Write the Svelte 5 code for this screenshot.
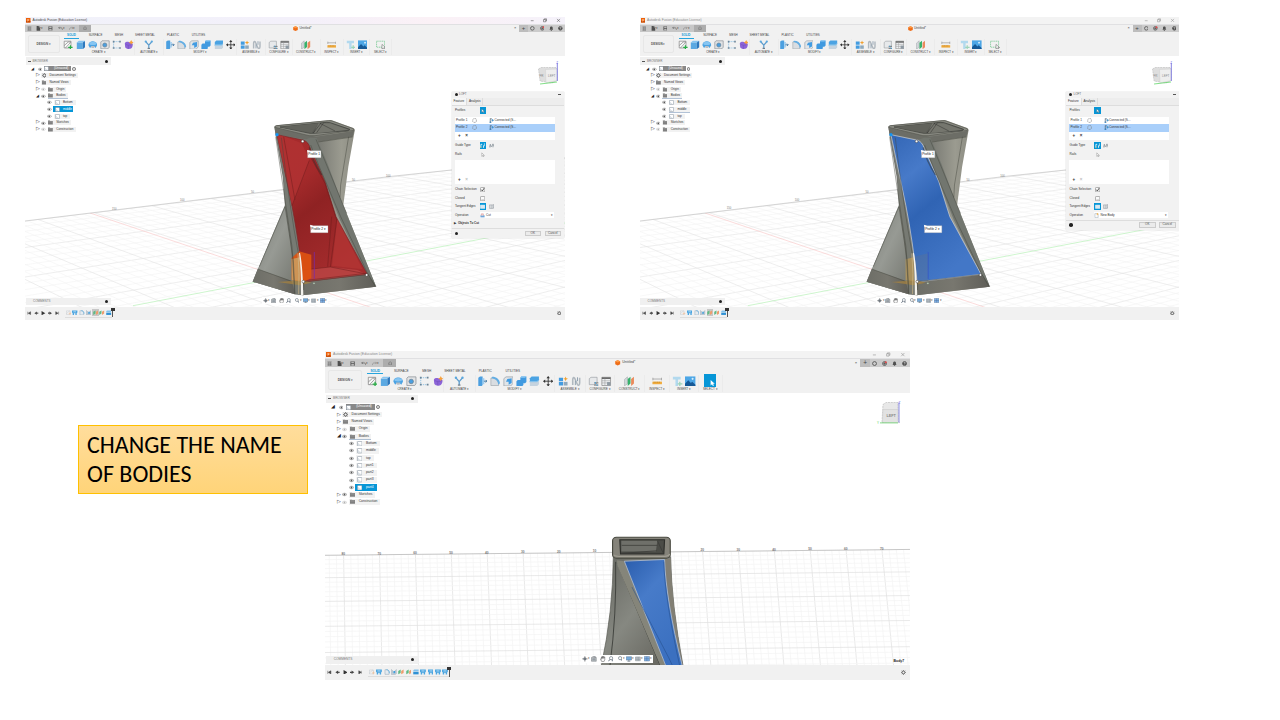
<script>
  const tabs = [['SOLID', 15], ['SURFACE', 33], ['MESH', 14], ['SHEET METAL', 38], ['PLASTIC', 18], ['UTILITIES', 33]];
  const groups = [
    ['CREATE', 72, ['sketch', 'extrude', 'revolve', 'hole', 'pattern', 'form']],
    ['AUTOMATE', 29, ['automate']],
    ['MODIFY', 73, ['press', 'fillet', 'shell', 'combine', 'split', 'move']],
    ['ASSEMBLE', 29, ['component', 'joint']],
    ['CONFIGURE', 26.5, ['config', 'table']],
    ['CONSTRUCT', 28, ['planes']],
    ['INSPECT', 23, ['measure']],
    ['INSERT', 26.5, ['insert', 'image']],
    ['SELECT', 22, ['select']]
  ];
  const head = [
    { t: 'Document Settings', k: 'gear', lv: 1 },
    { t: 'Named Views', k: 'folder', lv: 1 },
    { t: 'Origin', k: 'folder', lv: 1, eye: 'off' },
    { t: 'Bodies', k: 'folder', lv: 1, eye: 'on', open: true, under: true }
  ];
  const foot = [
    { t: 'Sketches', k: 'folder', lv: 1, eye: 'on' },
    { t: 'Construction', k: 'folder', lv: 1, eye: 'off' }
  ];
  const tree = (bodies, state, at) => [
    ...head,
    ...bodies.map((t, i) => ({ t, k: 'body', lv: 2, eye: 'on', sel: state === 'sel' && i === at, under: state === 'under' && i === at })),
    ...foot
  ];
  const windows = {
    cut: { id: 'cut', rows: tree(['Bottom', 'middle', 'top'], 'sel', 1), feats: ['sk', 'loft', 'fil', 'sh', 'pl', 'pl', 'sp'], active: 4, op: 'Cut' },
    body: { id: 'body', rows: tree(['Bottom', 'middle', 'top'], 'under', 1), feats: ['sk', 'loft', 'fil', 'sh', 'pl', 'pl', 'sp'], active: 4, op: 'New Body' },
    named: { id: 'named', rows: tree(['Bottom', 'middle', 'top', 'part1', 'part2', 'part3', 'part4'], 'sel', 6), feats: ['sk', 'loft', 'fil', 'sh', 'pl', 'pl', 'sp', 'loft', 'loft', 'loft', 'loft'], active: -1, large: true }
  };

  // Perspective floor grid: two fans of lines, each running to its own vanishing point
  const va = [1528, 41], vb = [-500, 20];
  const fanA = [], fanB = [];
  for (let i = 0; i < 42; i++) {
    const y = 221 + i * 5 + i * i * 0.06;
    fanA.push({ y, major: i % 5 === 0 });
  }
  for (let i = 0; i < 62; i++) {
    const x = -70 + i * 10.5 + i * i * 0.03;
    const y = 221 - 0.12 * (x - 25);
    const m = (y - vb[1]) / (x - vb[0]);
    fanB.push({ x, y, y2: y + m * (700 - x), major: i % 5 === 0 });
  }
  const vert = [];
  for (let i = -3; i < 86; i++) {
    const x = 343.5 + i * 7.18;
    vert.push({ x, x2: x + 6.5 + (x - 600) * 0.018, major: (i + 5) % 5 === 0 });
  }
  const horiz = [];
  for (let i = 0; i < 25; i++) {
    const y = 555.3 + i * 4.35 + i * i * 0.025;
    horiz.push({ y, major: i % 5 === 0 });
  }
  const ticks = Array.from({ length: 16 }, (_, i) => i).filter((i) => i !== 8);
</script>

{#snippet icon(name)}
  <svg class="ic" viewBox="0 0 12 12">
    {#if name === 'sketch'}
      <path d="M1.500 1.500h8.500v8.500h-8.500zM1.500 7l5-4.500 3.500 0M3 10L9.500 3" fill="#f8f8f8" stroke="#7d7d7d" stroke-width=".8" />
      <path d="M9.300 6.500v5.500M6.500 9.300h5.500" stroke="#27ae45" stroke-width="1.500" />
    {:else if name === 'extrude'}
      <path d="M1 3h7.500v8.500H1z" fill="#5ba9e2" /><path d="M1 3L3.500 1h8L8.500 3z" fill="#86c5f2" /><path d="M8.500 3l3-2v8l-3 2.500z" fill="#2d78bd" />
    {:else if name === 'revolve'}
      <path d="M.5 6.500C.5 0 11.500 0 11.500 6.500L9.500 10 7.500 8h-3L2.500 10z" fill="#4ba3e3" /><ellipse cx="6" cy="4.300" rx="4.500" ry="2" fill="#86c5f2" /><path d="M3.500 7.500h5l-1 2.500h-3z" fill="#b8bec5" />
    {:else if name === 'hole'}
      <path d="M1 2.500L2.500 1h9v8L10 11H1z" fill="#e1e3e5" stroke="#858b91" stroke-width=".8" /><circle cx="6" cy="6.300" r="2.600" fill="#4b9fe0" stroke="#6a7c8b" stroke-width=".8" />
    {:else if name === 'pattern'}
      <path d="M2 2h8M2 2v8M2 10h8" stroke="#5ba9de" stroke-width=".7" stroke-dasharray="1.500 1" fill="none" /><path d="M1 1h2v2H1zM9 1h2v2H9zM1 9h2v2H1zM9 9h2v2H9z" fill="#6c8496" />
    {:else if name === 'form'}
      <path d="M1 4.500C1 2.500 4 2 6 2.500s5 1 5 3-1 5-3 5.500S2 11 1.500 9z" fill="#8c64d7" /><path d="M2 5c2 2 6 2 8.500 0M5.500 6.500V11" stroke="#6f4dbb" stroke-width=".6" fill="none" /><path d="M9 0l1 2 2 1-2 1-1 2-1-2-2-1 2-1z" fill="#f8a13a" />
    {:else if name === 'automate'}
      <path d="M6 6.500v4M6 6.500L2.500 2.500M6 6.500l3.500-4" stroke="#5b9bcc" stroke-width="1.500" fill="none" /><circle cx="2.200" cy="2" r="1.400" fill="#5ba8de" /><circle cx="9.800" cy="2" r="1.400" fill="#5ba8de" /><path d="M4.500 10.500h3" stroke="#6f7a84" stroke-width="1.400" />
    {:else if name === 'press'}
      <path d="M1.500 2l2-1.500h3v10L5 12H1.500z" fill="#4b9fe0" /><path d="M6.500 2.500h2v7h-2z" fill="#9cccf0" /><path d="M8 6h3.500M10 4.500L11.500 6 10 7.500" stroke="#376f9d" stroke-width="1" fill="none" />
    {:else if name === 'fillet'}
      <path d="M1 2.500c5-1 8 2 9 6V11H1z" fill="#d9dde1" stroke="#8c959d" stroke-width=".6" /><path d="M2.500 1c5 0 8.500 3 9 7.500L9.500 10c0-4-3-7-8-7.500z" fill="#63aee4" />
    {:else if name === 'shell'}
      <path d="M1 3L3.500 1h8v7.500L9 11.500H1z" fill="#e1e5e8" stroke="#8c959d" stroke-width=".7" /><path d="M5 3.500l5-1V8L6.500 10V6.500H3.500z" fill="#429ce2" />
    {:else if name === 'combine'}
      <path d="M5 2l1-1.500h6v6.500l-1.500 1.500H8.500V10.500L7 12H.5V6L2 4.500h3z" fill="#419ae0" /><path d="M5 2l1-1.500h6L10.500 2z" fill="#8ccaf4" />
    {:else if name === 'split'}
      <path d="M1 2.500L3 .5h8.500v3.500l-2 2H1z" fill="#4ba3e3" /><path d="M1 7h8.500l2-2v4.500l-2 2H1z" fill="#c5d3df" /><path d="M.5 6.500h9.200l2-2" stroke="#5ab0ea" stroke-width=".8" fill="none" />
    {:else if name === 'move'}
      <path d="M6 1v10M1 6h10" stroke="#333" stroke-width="1" /><path d="M6 0l2 2.500H4zM6 12l2-2.500H4zM0 6l2.500-2v4zM12 6L9.500 4v4z" fill="#333" />
    {:else if name === 'component'}
      <path d="M1 2h4.800v4H1zM1 6.800h4.800V11H1z" fill="#439ce0" /><path d="M6.500 6.800H11V11H6.500z" fill="#8fa9bd" /><path d="M8.800.5l.8 2 2 .7-2 .8-.8 2-.8-2-2-.8 2-.7z" fill="#f2a02d" />
    {:else if name === 'joint'}
      <path d="M2 10.500v-6c0-4 2.500-3 3 0l2 4.500c1 2.500 3 2 3-1V2" stroke="#b0b8bf" stroke-width="1.800" fill="none" /><path d="M5 10.500v-5M7.500 1.500v4.500" stroke="#8397a8" stroke-width="1" />
    {:else if name === 'config'}
      <path d="M1.500 3l2-1.500H10.500v6.500l-2 2h-7z" fill="#e7e9eb" stroke="#92979c" stroke-width=".7" /><path d="M7 8h5M7 10.500h5" stroke="#666" stroke-width="1" /><path d="M8.500 7v2M10.500 9.500v2" stroke="#389fdf" />
    {:else if name === 'table'}
      <path d="M1 1.500h10v9.500H1z" fill="#eef0f2" stroke="#777" stroke-width=".7" /><path d="M1 2.500h10" stroke="#5b5b5b" stroke-width="1.700" /><path d="M1 5.500h10M1 8h10M4.500 3v7.500" stroke="#999" stroke-width=".6" /><path d="M7 7h4v4H7z" fill="#8f9aa3" />
    {:else if name === 'planes'}
      <path d="M.5 4L4 1v8L.5 11.500z" fill="#d2d7da" stroke="#92989c" stroke-width=".5" /><path d="M4.300 3.500L7.500.8v8L4.300 11.500z" fill="#37b16c" /><path d="M8.200 3.500L11.500.8v8l-3.300 2.700z" fill="#e98a5c" />
    {:else if name === 'measure'}
      <path d="M1 3.500h10M1 2v3M11 2v3" stroke="#888" stroke-width=".7" /><path d="M.5 6.500h11V9.500H.5z" fill="#f0ab3c" /><path d="M2.500 6.500V8M4.500 6.500V8M6.500 6.500V8M8.500 6.500V8" stroke="#aa7422" stroke-width=".5" />
    {:else if name === 'insert'}
      <path d="M1 1h9v3H7v7.500H4V4H1z" fill="#b2d9ee" /><path d="M9 6.500v5.500M6.500 9.200h5.500" stroke="#9dd4b9" stroke-width="1.500" />
    {:else if name === 'image'}
      <path d="M0 .5h12v11H0z" fill="#4ca6e6" /><circle cx="8.800" cy="3.300" r="1.200" fill="#d6eefb" /><path d="M0 9l3.800-4 3 3 1.500-1.500L12 10v1.500H0z" fill="#165996" />
    {:else if name === 'select'}
      <path d="M.7 1.500h10v7.500H.7z" fill="none" stroke="#55bd78" stroke-width=".8" stroke-dasharray="1.500 .8" /><path d="M7.500 5.500v6l1.500-1.400 1 1.900 1-.5-1-2h2z" fill="#fff" stroke="#555" stroke-width=".6" />
    {:else if name === 'picked'}
      <path d="M6.500 4.500v6.500l1.600-1.400 1 2 1.200-.6-1-2h2z" fill="#fff" />
    {:else if name === 'cursor'}
      <path d="M4 2v8l2-1.800 1.200 2.600 1.300-.6L7.300 7.700H10z" fill="#fff" stroke="#555" stroke-width=".7" />
    {:else if name === 'eye' || name === 'eyeoff'}
      <g opacity={name === 'eye' ? 1 : 0.45}><path d="M0 6C3 2 9 2 12 6 9 10 3 10 0 6z" fill="#fff" stroke="#666" stroke-width="1.100" /><circle cx="6" cy="6" r="2.200" fill="#555" /></g>
    {:else if name === 'folder'}
      <path d="M0 1.500h4.500l1 1H12v8.500H0z" fill="#808080" /><path d="M1 4.500h10" stroke="#ccc" stroke-width=".7" />
    {:else if name === 'gear'}
      <circle cx="6" cy="6" r="3.500" fill="none" stroke="#5a5a5a" stroke-width="2.200" /><path d="M6 0v2M6 10v2M0 6h2M10 6h2M1.800 1.800l1.400 1.400M8.800 8.800l1.400 1.400M10.200 1.800L8.800 3.200M3.200 8.800l-1.400 1.400" stroke="#5a5a5a" stroke-width="1.800" />
    {:else if name === 'body'}
      <rect x="1" y="1" width="10" height="10" rx="1.500" fill="#fff" stroke="#7d8c9b" stroke-width="1.200" /><path d="M3.500 5v3.500h4" stroke="#a9b8c5" fill="none" />
    {:else if name === 'orange'}
      <path d="M.5 3L6 .5 11.500 3v6.500L6 12 .5 9.500z" fill="#ef6d18" /><path d="M.5 3L6 5.500 11.500 3 6 .5z" fill="#ff9b43" />
    {:else if name === 'app'}
      <path d="M0 0h12v12H0z" fill="#ed610b" /><path d="M0 8h12v4H0z" fill="#c94c06" /><path d="M4 2.500h4.500V4H5.500v1.200h2.500v1.300H5.500V9H4z" fill="#ffd9b5" />
    {:else if name === 'menu'}
      <path d="M1 2h10M1 5h10M1 8h10M1 11h10M4 2v9M8 2v9" stroke="#666" stroke-width="1.100" />
    {:else if name === 'file'}
      <path d="M1.500 0h6L10.500 3v9H1.500z" fill="#4e4e4e" /><path d="M7.500 0V3h3" stroke="#ccc" fill="none" />
    {:else if name === 'save'}
      <path d="M1 1h10v10H1z" fill="#565656" /><path d="M3 2h6v3H3zM3 7h6v4H3z" fill="#bababa" />
    {:else if name === 'undo' || name === 'redo'}
      <path transform={name === 'redo' ? 'translate(12 0) scale(-1 1)' : ''} d="M4 2L1.500 4.500 4 7M2 4.500h5c3 0 4 2 4 5" fill="none" stroke={name === 'undo' ? '#555' : '#888'} stroke-width="1.500" />
    {:else if name === 'home'}
      <path d="M1 6l5-4 5 4M2.500 5.500V11h7V5.500" fill="none" stroke="#707070" stroke-width="1.700" />
    {:else if name === 'clock' || name === 'online' || name === 'help'}
      <circle cx="6" cy="6" r="4.600" fill={name === 'help' ? '#515151' : 'none'} stroke="#515151" stroke-width="2" />
      {#if name === 'online'}<path d="M3 6h6M6 3v6" stroke="#555" stroke-width="2" /><circle cx="9" cy="3" r="2.500" fill="#e24b4b" />{/if}
      {#if name === 'help'}<path d="M4.300 4.500c0-2 3.500-2 3.500 0C7.800 6 6 5.500 6 7.500M6 9v1" stroke="#fff" stroke-width="1.200" fill="none" />{/if}
    {:else if name === 'bell'}
      <path d="M1 9.500l1.500-2V5c0-5 7-5 7 0v2.500l1.500 2zM4.500 10h3v2h-3z" fill="#505050" />
    {:else if name === 'orbit'}
      <path d="M6 0v12M0 6h12" stroke="#555" /><circle cx="6" cy="6" r="3.300" fill="#727981" />
    {:else if name === 'look'}
      <path d="M1 3h10v8H1zM3 1h6v2" fill="#bcc1c5" stroke="#696e73" /><path d="M3 6h6M3 8h6" stroke="#69737d" />
    {:else if name === 'hand'}
      <path d="M3 11L1 6l2 .5V2h1.500v3V1H6v4l.5-4H8v4l.7-3H10v6l-2 4z" fill="#fafafa" stroke="#555" stroke-width="1.100" />
    {:else if name === 'zoom' || name === 'fit'}
      <circle cx="6.500" cy="4.500" r="3.400" fill="#f9fbfc" stroke="#66717b" stroke-width="1.300" /><path d={name === 'zoom' ? 'M4 7L1 11M9 7v4' : 'M9 7l2.500 4'} stroke="#39495a" stroke-width="1.600" />
    {:else if name === 'display'}
      <path d="M.5 1.500h11v7H.5z" fill="#75aada" stroke="#58738f" /><path d="M3 11h6M6 8v3" stroke="#5e6c79" stroke-width="1.300" />
    {:else if name === 'grid'}
      <path d="M1 2h10v8H1zM1 4.500h10M1 7.500h10M4.300 2v8M7.700 2v8" fill="#dce1e6" stroke="#77818a" stroke-width="1" />
    {:else if name === 'views'}
      <path d="M.5 1h11v9.500H.5z" fill="#7fb0e6" stroke="#667d98" /><path d="M6 1v9.500M.5 5.800h11" stroke="#4e709b" />
    {:else if name === 'sk'}
      <path d="M1 2h8v8H1zM1 8l7-6" fill="#f3f3f3" stroke="#b5bcc3" stroke-width=".8" /><path d="M9 5v6M6 8h6" stroke="#f5b581" />
    {:else if name === 'loft'}
      <path d="M0 1h12v4.500L10.500 7v4.500h-3V7.500h-3v4h-3V7L0 5.500z" fill="#4ba5e0" /><path d="M3 4h6" stroke="#d4edfd" stroke-width="1.500" />
    {:else if name === 'fil'}
      <path d="M2 1.500h4c3 1 4.500 3 4.500 5.500v4H2z" fill="#e6ebf0" stroke="#8ba3b5" /><path d="M5 1.500c4 0 6 2 6 7" stroke="#57ade2" stroke-width="1.600" fill="none" />
    {:else if name === 'sh'}
      <path d="M1 1V11.500H8.500l2.500-2V1L8.500 4v4H4V4z" fill="#c3cfd9" stroke="#8494a2" stroke-width=".7" /><path d="M5 4h3.500v4.500H5z" fill="#3e9fdd" />
    {:else if name === 'pl'}
      <path d="M.5 4L5.500 1v7L.5 11z" fill="#60b984" /><path d="M6.500 4L11.500 1v7l-5 3z" fill="#ee9d6d" />
    {:else if name === 'sp'}
      <path d="M.5 3L2.500 1H11.500v4H.5z" fill="#84c2ec" /><path d="M.5 6H11.500v5H.5z" fill="#2f91d4" />
    {:else if name === 'first'}
      <path d="M2 2v8M10 2L3.500 6 10 10z" stroke="#444" fill="#444" stroke-width="1.300" />
    {:else if name === 'prev'}
      <path d="M8 1.500L1 6l7 4.500z" fill="#444" /><path d="M7 6h5" stroke="#444" stroke-width="3" />
    {:else if name === 'play'}
      <path d="M1.500 0L12 6 1.500 12z" fill="#333" />
    {:else if name === 'next'}
      <path d="M4 1.500L11 6l-7 4.500z" fill="#444" /><path d="M0 6h5" stroke="#444" stroke-width="3" />
    {:else if name === 'last'}
      <path d="M10 2v8M2 2l6.500 4L2 10z" stroke="#444" fill="#444" stroke-width="1.300" />
    {:else if name === 'profile'}
      <path d="M2 4l2-2.500h5l1.500 2.500v4L8.500 10.500H4L1.500 8z" fill="none" stroke="#777" stroke-width="1.300" stroke-dasharray="5 1" />
    {:else if name === 'chain'}
      <path d="M3 1v10M3 2h4M3 10h3" stroke="#3a5061" stroke-width="1.500" fill="none" /><path d="M5 5.500h5M8 3l3 2.500L8 8z" stroke="#3185c4" fill="#3185c4" /><circle cx="3" cy="10" r="1.700" fill="#3185c4" />
    {:else if name === 'rails'}
      <path d="M2 10V3h3M8 11V6h3M10 1v3" stroke="#fff" stroke-width="1.800" fill="none" /><circle cx="2" cy="9.500" r="1.300" fill="#f3d272" />
    {:else if name === 'center'}
      <path d="M1 10l2-7 3 6 3-7 2 6M3 3v7M9 2v8" stroke="#7b8791" stroke-width="1.200" fill="none" />
    {:else if name === 'edge'}
      <path d="M1 2h8v8H1zM9 2l2-1v8L9 10M5 2v8" stroke="#798087" fill="#e4e7e9" stroke-width=".9" />
    {:else if name === 'edgeon'}
      <path d="M1 2.500h10v7.500H1z" fill="#dce8ef" stroke="#fff" />
    {:else if name === 'check' || name === 'empty'}
      <rect x="1" y="1" width="10" height="10" rx="2" fill="#fafafa" stroke="#777" stroke-width="1.300" />{#if name === 'check'}<path d="M3 6l2.300 3L9.500 2.500" stroke="#333" stroke-width="1.800" fill="none" />{:else}<path d="M3 8.500h6" stroke="#999" />{/if}
    {:else if name === 'opcut'}
      <path d="M1 5.500h10v5H1z" fill="#70a7da" /><path d="M3 6V2h5v4" fill="#f7dddd" stroke="#cc6b67" />
    {:else if name === 'opnew'}
      <path d="M2 1.500h6L10 4v7H2z" fill="#fafafa" stroke="#8396a8" /><path d="M8.500 0v5M6 2.500h5" stroke="#f4ac3b" stroke-width="1.500" />
    {/if}
  </svg>
{/snippet}

{#snippet tower(kind)}
  {@const dx = kind === 'cut' ? 0 : -0.6}
  <svg class="scene" viewBox="25 56 540 250.500" preserveAspectRatio="none">
    <defs>
      <clipPath id="floor-{kind}"><path d="M25 221L390 176.500 565 157V307H25z" /></clipPath>
      <linearGradient id="metal-{kind}" x1="0" x2="1"><stop offset="0" stop-color="#6c6d68" /><stop offset=".55" stop-color="#7d7e77" /><stop offset=".72" stop-color="#9b9b90" /><stop offset="1" stop-color="#77776f" /></linearGradient>
      <linearGradient id="side-{kind}" x1="0" x2="1" y2="1"><stop offset="0" stop-color="#777973" /><stop offset=".5" stop-color="#979a94" /><stop offset="1" stop-color="#72746d" /></linearGradient>
      <linearGradient id="base-{kind}" x1="0" x2="1"><stop offset="0" stop-color="#6d6e67" /><stop offset=".5" stop-color="#78776f" /><stop offset="1" stop-color="#5f5e58" /></linearGradient>
      <linearGradient id="face-{kind}" x1="0" y1="0" x2=".5" y2="1">
        {#if kind === 'cut'}<stop offset="0" stop-color="#a72b2c" /><stop offset=".35" stop-color="#a42a2b" /><stop offset=".55" stop-color="#8f2223" /><stop offset="1" stop-color="#a52c2d" />
        {:else}<stop offset="0" stop-color="#3366b5" /><stop offset=".3" stop-color="#477ac9" /><stop offset=".55" stop-color="#3064b4" /><stop offset="1" stop-color="#4377c7" />{/if}
      </linearGradient>
    </defs>
    <g clip-path="url(#floor-{kind})" fill="none">
      {#each fanA as l}<line x1="25" y1={l.y} x2={va[0]} y2={va[1]} stroke={l.major ? '#e2e2e2' : '#f3f3f3'} stroke-width=".6" />{/each}
      {#each fanB as l}<line x1={l.x} y1={l.y} x2="700" y2={l.y2} stroke={l.major ? '#e2e2e2' : '#f3f3f3'} stroke-width=".6" />{/each}
      <path d="M90 213L450 334" stroke="#f8c4c4" stroke-width=".6" />
      <path d="M133 305.700L565 223" stroke="#b9f0b9" stroke-width=".7" />
    </g>
    <path d="M25 221L390 176.500 565 158" stroke="#c4c4c4" stroke-width=".7" fill="none" />
    <g class="tick"><text x="112" y="209.500">150</text><text x="180" y="201">100</text><text x="251" y="193">50</text><text x="352" y="181">50</text><text x="386" y="177">100</text></g>
    <g transform="translate({240 + dx} 110) scale(.3333)" stroke-linejoin="round">
      <path d="M38 515L135 290 128 200 103 52Q103 47 110 46L265 31Q273 29 280 32L340 54Q346 57 344 63L325 170 310 285 408 530 188 556 165 553z" fill="url(#metal-{kind})" />
      <path d="M38 515L135 285 150 390 165 553z" fill="url(#side-{kind})" />
      <path d="M53 477L156 513 165 553 38 515z" fill="url(#base-{kind})" />
      <path d="M188 515L384 493 408 530 188 556z" fill="url(#base-{kind})" />
      <path d="M104 55L208 76 228 80 343 62 338 80 235 95 205 90 107 72z" fill="#6c6d66" />
      <path d="M104 52Q104 48 110 47L265 32 273 32 340 56 342 61 225 77 207 77z" fill="#8b8c84" stroke="#55564f" stroke-width="2" />
      <path d="M120 51L260 37 271 38 330 58 325 62 222 70 209 70z" fill="#5b5c56" stroke="#3d3e39" stroke-width="2" />
      <path d="M235 40L270 40 326 59 245 68 222 69z" fill="#75766e" /><path d="M120 51L235 40 215 69z" fill="#62635c" /><path d="M243 39L220 69M251 38L230 68M240 40L285 63" stroke="#30312e" stroke-width="1.500" fill="none" />
      <path d="M107 72L131 200 137 290 156 430 165 553 188 555 186 510 178 425 155 290 111 74z" fill="#777a73" />
      <path d="M193 90L210 83 230 84 262 160 308 282 408 528 382 495 300 330 220 125z" fill="#72766f" />
      <path d="M111 74L192 91Q205 96 211 115L255 215 288 320 382 493 190 516Q176 390 156 287z" fill="url(#face-{kind})" stroke={kind === 'cut' ? '#7f2324' : '#d3d5d6'} stroke-width="2" />
      {#if kind === 'cut'}
        <path d="M111 74L156 287 208 151 185 100 135 80z" fill="#b63635" opacity=".6" />
        <path d="M190 480L270 471 352 480 380 493 190 516z" fill="#bd4a49" opacity=".7" />
        <path d="M292 328L368 478 276 467z" fill="#b53635" opacity=".7" />
        <path d="M156 287L208 151M131 80L165 270M200 120L255 220 290 330 271 471 380 492M190 480L271 471M275 320L263 470M190 512L378 490" stroke="#701c1d" stroke-width="1.500" fill="none" />
        <path d="M155 444L177 424 214 434V505L188 516 155 510z" fill="#e0530f" opacity=".9" /><path d="M155 447L180 442V514L155 511z" fill="#caa465" opacity=".8" />
      {:else}
        <path d="M155 448L180 442V514L155 511z" fill="#b99a58" opacity=".75" /><path d="M180 440L223 430V513L188 516z" fill="#687487" opacity=".3" />
      {/if}
      <path d="M223 426V507" stroke={kind === 'cut' ? '#7629b6' : '#3452c7'} stroke-width="2" />
      <path d="M113 516L190 510 215 518 180 526z" fill="#b48939" opacity=".6" />
      <path d="M177 430Q183 470 183 555H190Q188 465 180 428z" fill="#f5f3ee" /><path d="M174 430Q179 490 176 552" stroke="#ceb889" stroke-width="2" fill="none" />
      <path d="M135 290L160 450 165 553M107 80L135 270 156 410 164 550M124 83Q150 300 175 430M212 105L240 175 302 320 384 493 408 530M228 88L262 170 308 282 320 310M326 80L302 225 300 262M235 96L338 81M53 477L152 513M58 470L135 290M191 540V515L378 494M384 493L405 528" stroke="#45473f" stroke-width="1.400" fill="none" />
      <path d="M208 112Q216 150 245 195" stroke="#2b302d" stroke-width="4" opacity=".5" fill="none" />
      <g fill="#fff" stroke="#333" stroke-width="1.500"><circle cx="188" cy="94" r="4" /><circle cx="190" cy="515" r="4" /><circle cx="380" cy="495" r="4" /><circle cx="222" cy="520" r="2" stroke="#8cad8c" /></g>
      <circle cx="111" cy="74" r="5" fill="#1495f2" />
      <g class="tag"><path d="M203 122h40v21h-40zM212 347h52v21h-52z" fill="#fff" stroke="#aaa" /><text x="205" y="136">Profile 1</text><text x="214" y="361">Profile 2</text><text x="253" y="361">▾</text><path d="M201 120l9 2-7 6zM210 344l9 3-7 5z" fill="#fff" /></g>
    </g>
    <path d="M538.500 69L541 67.500 556 67.500 557 69V80.500L552 83 540 81z" fill="#dedede" stroke="#b3b3b3" stroke-width=".5" stroke-dasharray="2 .7" />
    <path d="M545.500 69.500L557 69V80.500L546 83z" fill="#eeeeee" stroke="#c9c9c9" stroke-width=".4" />
    <text class="cube" x="539.500" y="77">FR</text><text class="cube" x="548" y="77">LEFT</text>
    <path d="M557.300 63V81" stroke="#7774dc" stroke-width=".9" /><path d="M540 84L557 82" stroke="#62d66a" stroke-width=".8" /><text class="cube z" x="556.300" y="64">Z</text>
  </svg>
{/snippet}

{#snippet straight()}
  <svg class="scene" viewBox="325 393.500 585 271.400" preserveAspectRatio="none">
    <defs>
      <clipPath id="plane"><path d="M325 555.300L910 549.500V665H325z" /></clipPath>
      <linearGradient id="left" x1="0" x2="1" y2="1"><stop offset="0" stop-color="#64655f" /><stop offset=".45" stop-color="#868881" /><stop offset="1" stop-color="#5b5a53" /></linearGradient>
      <linearGradient id="blue" x1="0" x2=".6" y2="1"><stop offset="0" stop-color="#2a5dad" /><stop offset=".4" stop-color="#477bc9" /><stop offset="1" stop-color="#3b70c0" /></linearGradient>
    </defs>
    <g clip-path="url(#plane)">
      {#each vert as l}<line x1={l.x} y1="550" x2={l.x2} y2="665" stroke={l.major ? '#dfdfdf' : '#f3f3f3'} stroke-width=".7" />{/each}
      {#each horiz as l}<line x1="325" y1={l.y} x2="910" y2={l.y - 5.800} stroke={l.major ? '#e0e0e0' : '#f3f3f3'} stroke-width=".7" />{/each}
    </g>
    <path d="M325 555.300L910 549.500" stroke="#bbb" stroke-width=".8" />
    <g class="tick2">{#each ticks as i}<text x={341.500 + i * 35.900} y={555 - i * 0.350}>{Math.abs(i - 8) * 10}</text>{/each}</g>
    <g transform="translate(320 530) scale(.3795 .3356)">
      <path d="M773 80L924 80Q926 220 957 406H741Q772 245 773 80z" fill="url(#left)" stroke="#5b5c55" stroke-width="2" />
      <path d="M779 95Q782 250 764 404M783 98L897 404" stroke="#3b3d39" stroke-width="2.500" fill="none" />
      <path d="M783 90L802 93 912 406H898L783 104z" fill="#85857a" />
      <path d="M908 88L924 85Q927 225 957 406H952L916 230z" fill="#827f74" />
      <path d="M802 93L908 88Q911 205 955 406H912z" fill="url(#blue)" stroke="#aab7cc" stroke-width="2.500" />
      <path d="M822 170L919 380 930 406M906 94Q908 200 948 404" stroke="#234c89" stroke-width="1.500" fill="none" />
      <rect x="771" y="22" width="152" height="62" rx="10" fill="#85837a" stroke="#47483f" stroke-width="3" />
      <path d="M790 29H908L906 72H792z" fill="#4b4c47" stroke="#2e2f2b" stroke-width="3" /><path d="M794 32H889L885 64H794z" fill="#6f706a" /><path d="M889 32L905 70 794 70 887 62M795 46H889" fill="none" stroke="#393a36" stroke-width="2" />
      <path d="M774 74Q777 79 790 79H907Q918 79 922 72" stroke="#a29f94" stroke-width="3" fill="none" />
    </g>
    <path d="M883 405L886 403H898V421L882 423z" fill="#e8e8e8" stroke="#b5b5b5" stroke-width=".6" stroke-dasharray="2 .8" />
    <path d="M883 410H898V421.500L900 423H882.500z" fill="#e2e2e2" stroke="#c9c9c9" stroke-width=".5" /><text class="cube big" x="886.500" y="417.300">LEFT</text>
    <path d="M899 403V423" stroke="#8584db" stroke-width="1" /><path d="M880 423.300H898" stroke="#75d378" stroke-width=".9" /><text class="cube z" x="898.500" y="404">Z</text><text class="cube y" x="877" y="424">Y</text>
    <text class="bodyname" x="893.500" y="661.300">Body7</text>
  </svg>
{/snippet}

{#snippet dialog(w)}
  <section class="dialog">
    <header><i class="dot"></i>LOFT<b></b></header>
    <nav><span class="cur">Feature</span><span>Analysis</span></nav>
    <div class="row"><span class="lab">Profiles</span><span class="btn on">{@render icon('cursor')}</span></div>
    <div class="list">
      {#each ['Profile 1', 'Profile 2'] as p, i}
        <div class="prof" class:hit={i === 1}><span>{p}</span>{@render icon('profile')}<em>{@render icon('chain')}</em><span>Connected (S...</span></div>
      {/each}
      <p>+<span>×</span></p>
    </div>
    <div class="row guide"><span class="lab">Guide Type</span><span class="btn on">{@render icon('rails')}</span><span class="btn">{@render icon('center')}</span></div>
    <div class="row"><span class="lab">Rails</span><span class="btn">{@render icon('cursor')}</span></div>
    <div class="list rails"><p>+<span class="dim">×</span></p></div>
    <div class="row"><span class="lab">Chain Selection</span><span class="btn">{@render icon('check')}</span></div>
    <div class="row"><span class="lab">Closed</span><span class="btn">{@render icon('empty')}</span></div>
    <div class="row"><span class="lab">Tangent Edges</span><span class="btn on">{@render icon('edgeon')}</span><span class="btn">{@render icon('edge')}</span></div>
    <div class="row"><span class="lab">Operation</span><span class="drop">{@render icon(w.op === 'Cut' ? 'opcut' : 'opnew')}<span>{w.op}</span><u>▾</u></span></div>
    {#if w.op === 'Cut'}<div class="objects">▶<span>Objects To Cut</span></div>{/if}
    <footer><i class="dot info"></i><button>OK</button><button>Cancel</button></footer>
  </section>
{/snippet}

{#snippet fusion(w)}
  <article class="win" class:large={w.large}>
    <header class="title" class:lit={w.id === 'cut'}>{@render icon('app')}<span>Autodesk Fusion (Education License)</span><div class="caps"><svg viewBox="0 0 31 5"><path d="M.8 2.700h2.800M13.500 1.600h2.200v2.200h-2.200zM14.300 1.600V.8h2.200V3h-.7M27 .9l3 3M30 .9l-3 3" fill="none" stroke="currentColor" stroke-width=".5" /></svg></div></header>
    <div class="docs">
      <div class="quick">{@render icon('menu')}{@render icon('file')}<s>▾</s>{@render icon('save')}{@render icon('undo')}<s>▾</s>{@render icon('redo')}<s>▾</s></div>
      <div class="home">{@render icon('home')}</div>
      <div class="doc">{@render icon('orange')}<span>Untitled*</span></div>
      <span class="shut">×</span><div class="plus">+</div>
      <div class="status">{@render icon('clock')}{@render icon('online')}{@render icon('bell')}{@render icon('help')}</div>
    </div>
    <div class="ribbon">
      <div class="design">DESIGN ▾</div>
      <div class="tools">
        <div class="tabs">{#each tabs as [t, width], i}<span class:now={i === 0} style="width:{width}px">{t}</span>{/each}</div>
        <div class="groups">
          {#each groups as [name, width, icons]}
            <div class="group" style="width:{width}px">
              <div class="icons">{#each icons as k}<span class:chosen={k === 'select' && w.large}>{@render icon(k === 'select' && w.large ? 'picked' : k)}</span>{/each}</div>
              <small>{name} ▾</small>
            </div>
          {/each}
        </div>
      </div>
    </div>
    <main>
      {#if w.large}{@render straight()}{:else}{@render tower(w.id)}{/if}
      <aside>
        <div class="bar"><b></b>BROWSER<i class="dot"></i></div>
        <div class="node root"><u>◢</u>{@render icon('eye')}<div class="rootname">{@render icon('body')}<span>(Unsaved)</span></div><i class="target"></i></div>
        {#each w.rows as r}
          <div class="node" class:deep={r.lv === 2}>
            {#if r.lv === 1}<u class:shutarrow={!r.open}>{r.open ? '◢' : '▷'}</u>{/if}
            {#if r.eye}{@render icon(r.eye === 'on' ? 'eye' : 'eyeoff')}{/if}
            <div class="name" class:sel={r.sel} class:under={r.under}>{@render icon(r.k)}<span>{r.t}</span></div>
          </div>
        {/each}
      </aside>
      {#if w.op}{@render dialog(w)}{/if}
      <div class="bar comments">COMMENTS<i class="dot"></i></div>
      <div class="navbar">{@render icon('orbit')}<s>▾</s>{@render icon('look')}{@render icon('hand')}{@render icon('zoom')}{@render icon('fit')}<s>▾</s>{@render icon('display')}<s>▾</s>{@render icon('grid')}<s>▾</s>{@render icon('views')}<s>▾</s></div>
    </main>
    <div class="timeline">
      <div class="play">{#each ['first', 'prev', 'play', 'next', 'last'] as k}{@render icon(k)}{/each}</div>
      <div class="feats">{#each w.feats as f, i}<span class:active={i === w.active}>{@render icon(f)}</span>{/each}<i class="marker"></i></div>
      <div class="cog">{@render icon('gear')}</div>
    </div>
  </article>
{/snippet}

<div class="slide">
  <div class="top">{@render fusion(windows.cut)}{@render fusion(windows.body)}</div>
  <div class="bottom">
    <div class="note">CHANGE THE NAME<br />OF BODIES</div>
    {@render fusion(windows.named)}
  </div>
</div>

<style>
  :global(body) { background: #fff; }
  .slide { width: 1280px; height: 720px; overflow: hidden; box-sizing: border-box; padding: 17px 0 0 25px; background: #fff; }
  .top { display: flex; gap: 74.500px; height: 303px; }
  .bottom { display: flex; align-items: flex-start; gap: 17px; padding-left: 53px; margin-top: 31px; }
  .note { width: 230px; height: 69px; box-sizing: border-box; margin-top: 74px; border: 1px solid #ffc000; background: linear-gradient(#ffdd9c, #ffd479); padding: 4px 0 0 8px; font: 24px/29px Carlito, Calibri, Lato, sans-serif; color: #000; white-space: nowrap; }
  .win { display: grid; grid-template-rows: 6.500px 8.500px 24px 1fr 13.500px; grid-template-columns: 100%; width: 540px; height: 303px; flex: none; background: #fff; overflow: hidden; font: 3.200px/1 "Liberation Sans", Arial, sans-serif; color: #444; }
  .top .win:last-child { width: 539px; }
  .large { zoom: 1.0833; height: 303.700px; }
  .ic { display: block; flex: none; width: 5px; height: 5px; }
  s, u, em, i { text-decoration: none; font-style: normal; }
  s { font-size: 3px; width: 3px; flex: none; }
  .title { display: flex; align-items: center; gap: 2px; padding-left: 1px; background: #f3f3f3; color: #888; font-size: 3.300px; }
  .title > .ic { width: 4.500px; height: 4.500px; }
  .lit { background: linear-gradient(90deg, #f1f2fa, #f3f0fa 50%, #fbf1f6 75%, #f5f2fa); color: #444; }
  .title span { flex: 1; white-space: nowrap; }
  .caps { width: 31px; margin-right: 4px; }
  .caps svg { display: block; width: 31px; height: 5px; }
  .docs { display: flex; align-items: center; background: #f1f1f1; border-top: 1px solid #e0e0e2; box-sizing: border-box; }
  .quick { display: flex; align-items: center; height: 100%; width: 54px; background: #c7c7c7; box-sizing: border-box; padding-left: 2px; }
  .quick .ic { width: 4.800px; height: 4.800px; }
  .quick .ic:nth-child(1) { margin-right: 4.500px; }
  .quick .ic:nth-child(4) { margin: 0 5px 0 4px; }
  .quick .ic:nth-child(7) { margin-left: 3px; }
  .home { height: 100%; width: 12px; background: #adadad; display: flex; align-items: center; justify-content: center; }
  .home .ic { width: 4px; height: 4px; }
  .doc { flex: 1; display: flex; align-items: center; gap: 1.500px; padding-left: 202px; }
  .shut { font-size: 4px; width: 5px; }
  .plus { background: #bdbdbd; width: 9px; height: 100%; display: flex; align-items: center; justify-content: center; font-size: 6px; }
  .status { height: 100%; width: 37px; background: #cbcbcb; display: flex; align-items: center; justify-content: space-around; }
  .status .ic { width: 4.700px; height: 4.700px; }
  .ribbon { display: flex; background: #f1f1f1; }
  .design { margin: 3px 0 0 3px; width: 31.500px; height: 18px; box-sizing: border-box; border: 1px solid #e7e7e7; border-radius: 2px; display: flex; align-items: center; justify-content: center; font-size: 3px; font-weight: 700; color: #555; }
  .tools { padding-left: 2.500px; flex: 1; }
  .tabs { display: flex; height: 7px; padding-left: 2px; font-size: 2.900px; }
  .tabs span { text-align: center; white-space: nowrap; padding-top: 2.300px; box-sizing: border-box; height: 6.500px; }
  .tabs .now { color: #0696d7; border-bottom: 1px solid #26a4dd; font-weight: 700; }
  .groups { display: flex; padding-left: 1.200px; }
  .group { display: flex; flex-direction: column; align-items: center; height: 16px; box-sizing: border-box; border-right: 1px solid #ebebeb; flex: none; }
  .icons { display: flex; align-items: center; gap: 1.500px; height: 11px; }
  .icons span { display: flex; align-items: center; justify-content: center; width: 10.700px; height: 10.700px; }
  .icons .ic { width: 9.600px; height: 9.600px; }
  .icons .chosen { background: #0696d7; width: 11.300px; height: 12px; }
  small { font-size: 2.800px; margin-top: 1.200px; white-space: nowrap; }
  main { position: relative; overflow: hidden; background: #fff; }
  .scene { position: absolute; inset: 0; width: 100%; height: 100%; }
  .tick { font-size: 2.700px; fill: #777; } .tick2 { font-size: 3.200px; fill: #777; font-weight: 700; }
  .tag { font-size: 9.500px; fill: #111; } .cube { font-size: 3px; fill: #888; } .big { font-size: 3.800px; font-weight: 700; } .z { fill: #6664e7; } .y { fill: #4dd452; } .bodyname { font-size: 3.500px; font-weight: 700; fill: #222; }
  aside { position: absolute; left: .5px; top: 1.300px; width: 85px; }
  .bar { height: 7.500px; width: 85px; box-sizing: border-box; background: #f0f0f0; display: flex; align-items: center; gap: 2px; padding: 0 3px 0 2px; font-size: 3px; color: #777; }
  .bar b, .dialog header b { width: 3px; height: 1px; background: #555; }
  .dot { width: 3px; height: 3px; border-radius: 50%; background: #222; flex: none; }
  .bar .dot { margin-left: auto; }
  .node { display: flex; align-items: center; height: 6.750px; padding-left: 10.500px; font-size: 3.100px; color: #333; }
  .node > .ic { width: 4.600px; height: 4.600px; margin-right: 2px; }
  .node u { font-size: 4.200px; width: 5px; flex: none; color: #222; }
  .node .shutarrow { font-size: 4.800px; }
  .root { padding-left: 5.500px; margin-top: .7px; }
  .root u { width: 6.500px; }
  .rootname { height: 5px; display: flex; align-items: center; background: #888; color: #fff; width: 27px; margin-right: 1px; }
  .rootname span { margin-left: 5px; } .rootname .ic { height: 4.800px; width: 4.800px; }
  .target { width: 3.500px; height: 3.500px; border: 1px solid #777; border-radius: 50%; box-sizing: border-box; background: #ddd; }
  .name { display: flex; align-items: center; height: 5.200px; gap: 3.300px; background: #f2f2f2; padding: 0 2px 0 .5px; white-space: nowrap; }
  .name .ic { width: 4.800px; height: 4.800px; }
  .deep { padding-left: 21.500px; } .deep .name { padding-right: 3px; margin-left: .5px; } .deep .name .ic { height: 5px; width: 5px; }
  .name.under { box-shadow: 0 .6px #809bbb; }
  .name.sel { background: #0696d7; color: #fff; width: 15.500px; height: 6px; margin-left: -.5px; padding-left: 1.500px; }
  .comments { position: absolute; left: .5px; bottom: 1.500px; padding-left: 7.500px; }
  .navbar { position: absolute; left: 236.500px; bottom: 2.500px; height: 7px; display: flex; align-items: center; background: #fff; gap: 1.450px; padding: 0 1px; }
  .navbar .ic { width: 5.300px; height: 5.300px; } .navbar s { width: 1.300px; margin-left: -1px; }
  .navbar .ic:nth-child(3), .navbar .ic:nth-child(4), .navbar .ic:nth-child(5) { margin-right: 1px; }
  .timeline { background: #f1f1f1; display: flex; align-items: flex-start; padding-top: 2px; box-sizing: border-box; }
  .play { display: flex; gap: 2.700px; padding: 2px 0 0 2.300px; } .play .ic { width: 4.300px; height: 4.300px; }
  .feats { display: flex; position: relative; margin-left: 5.500px; height: 8.500px; border-bottom: 1px solid #ddd; margin-top: .7px; box-sizing: border-box; }
  .feats span { width: 6.750px; height: 7px; display: flex; align-items: center; justify-content: center; } .feats .ic { width: 5.400px; height: 5.400px; } .feats .active { background: #c7c7c7; }
  .marker { position: absolute; right: -1px; top: -1px; width: 1px; height: 9px; background: #555; }
  .marker::before { content: ''; position: absolute; left: -1.500px; width: 4px; height: 2.500px; background: #333; }
  .cog { margin-left: auto; padding: 2px 4px 0 0; } .cog .ic { width: 4.500px; height: 4.500px; }
  .dialog { position: absolute; left: 426.500px; top: 35.500px; width: 112.500px; background: #f2f2f2; box-shadow: 0 0 1px #bbb; font-size: 3.100px; color: #333; white-space: nowrap; }
  .dialog header { height: 6px; display: flex; align-items: center; padding: 0 3px; gap: 1.500px; color: #666; font-size: 3px; } .dialog header b { margin-left: auto; }
  .dialog nav { height: 8px; display: flex; border-bottom: .5px solid #ddd; box-sizing: border-box; background: #ededed; } .dialog nav span { padding: 2.500px 2px 0; width: 16px; box-sizing: border-box; border-right: 1px solid #ddd; } .dialog nav .cur { background: #f6f6f6; width: 15.500px; }
  .row { display: flex; align-items: center; height: 8.500px; padding-left: 3.500px; gap: 2px; } .lab { width: 22.500px; }
  .row:nth-of-type(1) { height: 10px; }
  .btn { width: 6.500px; height: 7px; display: flex; align-items: center; justify-content: center; flex: none; } .btn .ic { width: 5.300px; height: 5.300px; } .on { background: #0696d7; }
  .list { width: 100px; height: 23.500px; background: #fff; margin: 1px 0 1.500px 3px; position: relative; display: flex; flex-direction: column; }
  .prof { height: 7.500px; display: flex; align-items: center; padding-left: 1.500px; } .prof > span:first-child { width: 16px; } .prof em { margin: 0 .5px 0 12px; } .hit { background: #a9cffa; }
  .list p { margin: auto 0 1.500px 3.500px; font-size: 4.500px; font-weight: 700; } .list p span { margin-left: 4.500px; } .list .dim { color: #bbb; } .rails { margin-bottom: 2px; margin-top: 1.500px; }
  .drop { background: #fff; height: 6px; width: 74px; display: flex; align-items: center; gap: 1.500px; } .drop u { margin-left: auto; font-size: 3px; padding-right: 1px; }
  .objects { height: 8.500px; display: flex; align-items: center; gap: 2px; padding-left: 2.500px; font-size: 3px; font-weight: 700; }
  .dialog footer { height: 10px; display: flex; align-items: center; border-top: .5px solid #ddd; padding: 0 3px; gap: 3.500px; box-sizing: border-box; } .info { width: 3.500px; height: 3.500px; margin-right: auto; }
  button { all: unset; box-sizing: border-box; height: 5.500px; width: 16.500px; border: 1px solid #ccc; background: #ebebeb; text-align: center; font: 3.100px/3.500px "Liberation Sans", Arial, sans-serif; color: #555; }
</style>
